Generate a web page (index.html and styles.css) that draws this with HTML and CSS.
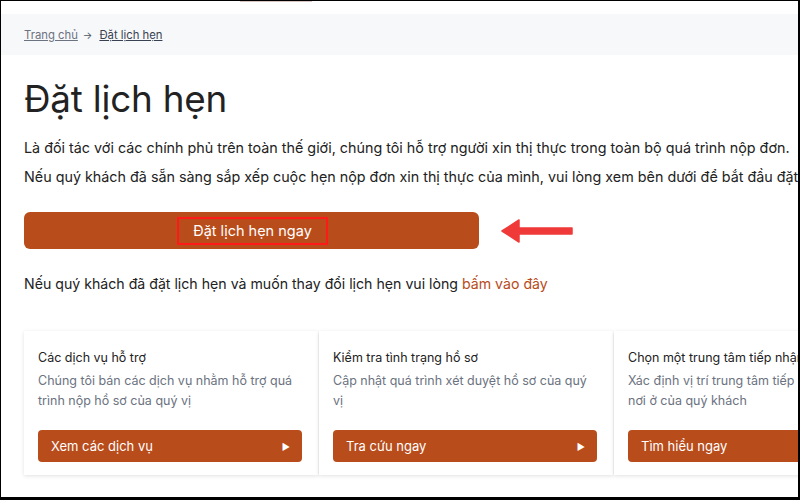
FILE: index.html
```html
<!DOCTYPE html>
<html lang="vi">
<head>
    <meta charset="UTF-8">
    <title>Đặt lịch hẹn</title>
    <link rel="stylesheet" href="styles.css">
</head>
<body>
    <div class="frame">
        <div class="top-strip"><span class="tab-line"></span></div>
        <div class="breadcrumb">
            <a href="#" class="crumb">Trang chủ</a>
            <span class="crumb-arrow">&rarr;</span>
            <a href="#" class="crumb current">Đặt lịch hẹn</a>
        </div>

        <div class="content">
            <h1>Đặt lịch hẹn</h1>
            <p class="intro">Là đối tác với các chính phủ trên toàn thế giới, chúng tôi hỗ trợ người xin thị thực trong toàn bộ quá trình nộp đơn.</p>
            <p class="intro">Nếu quý khách đã sẵn sàng sắp xếp cuộc hẹn nộp đơn xin thị thực của mình, vui lòng xem bên dưới để bắt đầu đặt lịch hẹn.</p>

            <div class="cta-row">
                <button class="book-button"><span class="highlight">Đặt lịch hẹn ngay</span></button>
                <svg class="arrow" width="74" height="30" viewBox="0 0 74 30">
                    <path d="M2 15 L19 4 L19 12 L72 12 L72 18 L19 18 L19 26 Z" fill="#f03a3a" stroke="#f03a3a" stroke-width="1.5" stroke-linejoin="round"/>
                </svg>
            </div>

            <p class="change">Nếu quý khách đã đặt lịch hẹn và muốn thay đổi lịch hẹn vui lòng <a href="#" class="link">bấm vào đây</a></p>

            <div class="cards">
                <div class="card">
                    <h3>Các dịch vụ hỗ trợ</h3>
                    <p>Chúng tôi bán các dịch vụ nhằm hỗ trợ quá trình nộp hồ sơ của quý vị</p>
                    <button class="card-button">Xem các dịch vụ <span class="tri">&#9654;</span></button>
                </div>
                <div class="card">
                    <h3>Kiểm tra tình trạng hồ sơ</h3>
                    <p>Cập nhật quá trình xét duyệt hồ sơ của quý vị</p>
                    <button class="card-button">Tra cứu ngay <span class="tri">&#9654;</span></button>
                </div>
                <div class="card">
                    <h3>Chọn một trung tâm tiếp nhận hồ sơ</h3>
                    <p>Xác định vị trí trung tâm tiếp nhận gần<br>nơi ở của quý khách</p>
                    <button class="card-button">Tìm hiểu ngay <span class="tri">&#9654;</span></button>
                </div>
            </div>
        </div>
    </div>
</body>
</html>
```

FILE: styles.css
```css
body {
    margin: 0;
    font-family: Inter, "Noto Sans", sans-serif;
    color: #222;
}

.frame {
    width: 800px;
    height: 500px;
    box-sizing: border-box;
    border-top: 1px solid #000;
    border-left: 1px solid #000;
    border-right: 2px solid #000;
    border-bottom: 3px solid #000;
    overflow: hidden;
    background: #fff;
}

.top-strip {
    height: 13px;
}

.tab-line {
    display: block;
    margin-left: 239px;
    width: 72px;
    height: 1px;
    background: #d9c6c2;
}

.breadcrumb {
    height: 41px;
    background: #f7f8fa;
    display: flex;
    align-items: center;
    padding-left: 23px;
    font-size: 11.3px;
}

.crumb {
    color: #6b7280;
}

.crumb.current {
    color: #374151;
}

.crumb-arrow {
    color: #4b5563;
    font-size: 10px;
    margin: 0 7px 0 5px;
}

.content {
    padding-left: 23px;
}

h1 {
    font-size: 36.8px;
    font-weight: 400;
    margin: 21px 0 12px;
    color: #222;
    letter-spacing: -0.2px;
}

.intro {
    font-size: 14.33px;
    margin: 0;
    line-height: 29px;
    white-space: nowrap;
}

.cta-row {
    display: flex;
    align-items: center;
    margin-top: 21px;
}

.book-button {
    width: 455px;
    height: 37px;
    background: #b84c1b;
    border: none;
    border-radius: 6px;
    color: #fff;
    font-family: inherit;
    font-size: 14.5px;
}

.highlight {
    display: inline-block;
    border: 2px solid #ff1a1a;
    padding: 3px 14px 4px;
    margin-left: 2px;
}

.arrow {
    margin-left: 21px;
}

.change {
    font-size: 14.15px;
    margin: 26px 0 0;
}

.link {
    color: #b84c1b;
    text-decoration: none;
}

.cards {
    display: flex;
    margin-top: 39px;
    gap: 1px;
}

.card {
    flex: 0 0 294px;
    box-shadow: 0 1px 4px rgba(0, 0, 0, 0.12);
    padding: 19px 14px 13px;
    box-sizing: border-box;
    background: #fff;
}

.card h3 {
    font-size: 12.5px;
    font-weight: 400;
    margin: 0 0 6px;
    color: #222;
    white-space: nowrap;
}

.card p {
    font-size: 12.5px;
    color: #6b7280;
    margin: 0 0 19px;
    line-height: 20px;
    height: 40px;
    white-space: nowrap;
}

.card:not(:last-child) p {
    white-space: normal;
}

.card-button {
    width: 264px;
    height: 32px;
    background: #b84c1b;
    border: none;
    border-radius: 4px;
    color: #fff;
    font-family: inherit;
    font-size: 13px;
    display: flex;
    align-items: center;
    justify-content: space-between;
    padding: 0 12px 0 13px;
}

.tri {
    font-size: 9px;
}
```
